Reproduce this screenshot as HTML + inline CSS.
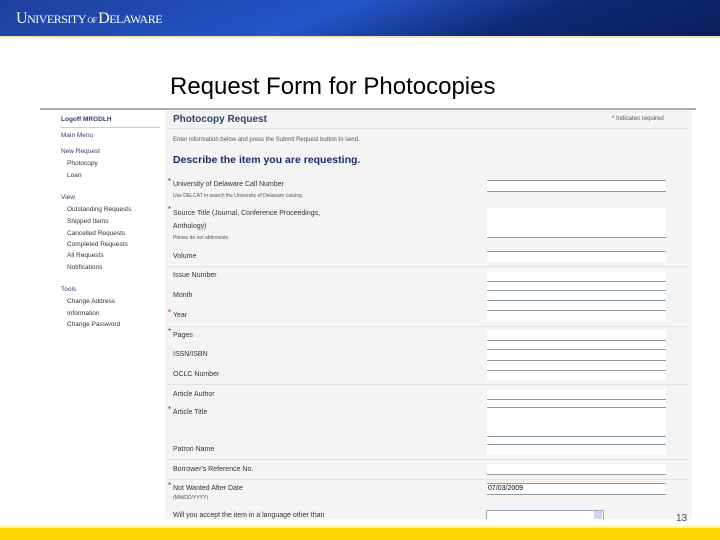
<!DOCTYPE html>
<html><head><style>
body{margin:0;width:720px;height:540px;position:relative;overflow:hidden;background:#fff;font-family:"Liberation Sans",sans-serif}
.a{position:absolute}
.hdr{left:0;top:0;width:720px;height:36px;background:linear-gradient(160deg,#1c3f9c 0%,#2456c8 45%,#0f2a78 70%,#0a1e5a 100%)}
.lbl{position:absolute;font-size:7px;color:#333;left:173px}
.req{color:#c00;font-size:8px;position:absolute;left:168px}
.nav{position:absolute;font-size:6.5px;color:#333}
.ln{position:absolute;left:487px;width:179px;height:1px;background:#8a9aa6}
.wb{position:absolute;left:487px;width:179px;background:#fff}
.sep{position:absolute;left:168px;width:521px;height:1px;background:#e2e2e2}
</style></head><body>
<div class="a hdr"></div>
<div class="a" style="left:0;top:36px;width:720px;height:2px;background:#efe5b0"></div>
<div class="a" style="left:16px;top:10px;color:#fff;font-family:'Liberation Serif',serif;font-size:16px;letter-spacing:-0.5px">U<span style="font-size:12px">NIVERSITY</span><span style="font-size:8px"> OF </span>D<span style="font-size:12px">ELAWARE</span></div>
<div class="a" style="left:170px;top:73px;font-size:24px;color:#000">Request Form for Photocopies</div>
<div class="a" style="left:40px;top:108px;width:656px;height:2px;background:#b0aca4"></div>
<div class="a" style="left:165px;top:110px;width:527px;height:410px;background:#f4f4f4"></div>
<div class="a" style="left:60px;top:127px;width:100px;height:1px;background:#ccc"></div>
<div class="nav" style="left:61px;top:116px;color:#33406b;font-weight:bold">Logoff MRGDLH</div>
<div class="nav" style="left:61px;top:132px;color:#33406b">Main Menu</div>
<div class="nav" style="left:61px;top:148px;color:#33406b">New Request</div>
<div class="nav" style="left:67px;top:160px">Photocopy</div>
<div class="nav" style="left:67px;top:172px">Loan</div>
<div class="nav" style="left:61px;top:194px;color:#33406b">View</div>
<div class="nav" style="left:67px;top:206px">Outstanding Requests</div>
<div class="nav" style="left:67px;top:218px">Shipped Items</div>
<div class="nav" style="left:67px;top:230px">Cancelled Requests</div>
<div class="nav" style="left:67px;top:241px">Completed Requests</div>
<div class="nav" style="left:67px;top:252px">All Requests</div>
<div class="nav" style="left:67px;top:264px">Notifications</div>
<div class="nav" style="left:61px;top:286px;color:#33406b">Tools</div>
<div class="nav" style="left:67px;top:298px">Change Address</div>
<div class="nav" style="left:67px;top:310px">Information</div>
<div class="nav" style="left:67px;top:321px">Change Password</div>
<div class="a" style="left:173px;top:114px;font-size:10px;font-weight:bold;color:#33406b">Photocopy Request</div>
<div class="a" style="left:612px;top:116px;font-size:6px;color:#555"><span style="color:#c00">*</span> Indicates required</div>
<div class="sep" style="top:128px"></div>
<div class="lbl" style="top:137px;font-size:6px;color:#555">Enter information below and press the Submit Request button to send.</div>
<div class="a" style="left:173px;top:154px;font-size:10.5px;font-weight:bold;color:#1a2a6b">Describe the item you are requesting.</div>
<div class="req" style="top:177px">*</div><div class="lbl" style="top:181px">University of Delaware Call Number</div>
<div class="lbl" style="top:193px;font-size:5px;color:#555">Use DELCAT to search the University of Delaware catalog.</div>
<div class="ln" style="top:180px"></div><div class="wb" style="top:181px;height:10px"></div><div class="ln" style="top:191px"></div>
<div class="req" style="top:205px">*</div><div class="lbl" style="top:210px">Source Title (Journal, Conference Proceedings,</div>
<div class="lbl" style="top:223px">Anthology)</div>
<div class="lbl" style="top:235px;font-size:5px;color:#555">Please do not abbreviate.</div>
<div class="wb" style="top:208px;height:29px"></div><div class="ln" style="top:237px"></div>
<div class="ln" style="top:251px"></div><div class="wb" style="top:252px;height:10px"></div>
<div class="lbl" style="top:253px">Volume</div>
<div class="sep" style="top:266px"></div>
<div class="wb" style="top:271px;height:50px"></div>
<div class="ln" style="top:281px"></div><div class="ln" style="top:290px"></div><div class="ln" style="top:300px"></div><div class="ln" style="top:310px"></div>
<div class="lbl" style="top:272px">Issue Number</div>
<div class="lbl" style="top:292px">Month</div>
<div class="req" style="top:308px">*</div><div class="lbl" style="top:312px">Year</div>
<div class="sep" style="top:326px"></div>
<div class="req" style="top:327px">*</div><div class="lbl" style="top:332px">Pages</div>
<div class="wb" style="top:330px;height:50px"></div>
<div class="ln" style="top:340px"></div><div class="ln" style="top:349px"></div><div class="ln" style="top:360px"></div><div class="ln" style="top:370px"></div>
<div class="lbl" style="top:351px">ISSN/ISBN</div>
<div class="lbl" style="top:371px">OCLC Number</div>
<div class="sep" style="top:384px"></div>
<div class="wb" style="top:389px;height:66px"></div>
<div class="ln" style="top:399px"></div><div class="ln" style="top:407px"></div><div class="ln" style="top:436px"></div><div class="ln" style="top:444px"></div>
<div class="lbl" style="top:391px">Article Author</div>
<div class="req" style="top:405px">*</div><div class="lbl" style="top:409px">Article Title</div>
<div class="lbl" style="top:446px">Patron Name</div>
<div class="sep" style="top:459px"></div>
<div class="wb" style="top:464px;height:10px"></div><div class="ln" style="top:474px"></div>
<div class="lbl" style="top:466px">Borrower's Reference No.</div>
<div class="sep" style="top:479px"></div>
<div class="req" style="top:481px">*</div><div class="lbl" style="top:485px">Not Wanted After Date</div>
<div class="lbl" style="top:495px;font-size:5px;color:#555">(MM/DD/YYYY)</div>
<div class="ln" style="top:483px"></div><div class="wb" style="top:484px;height:10px"></div><div class="ln" style="top:494px"></div>
<div class="a" style="left:488px;top:485px;font-size:7px;color:#000">07/03/2009</div>
<div class="lbl" style="top:512px">Will you accept the item in a language other than</div>
<div class="a" style="left:486px;top:510px;width:116px;height:9px;background:#fff;border:1px solid #9ab"></div>
<div class="a" style="left:594px;top:511px;width:8px;height:8px;background:#c8d4f0"></div>
<div class="a" style="left:165px;top:519px;width:531px;height:8px;background:#fff"></div>
<div class="a" style="left:676px;top:513px;font-size:10px;color:#444">13</div>
<div class="a" style="left:0;top:528px;width:720px;height:12px;background:#ffd500"></div>
<div class="a" style="left:0;top:526px;width:720px;height:2px;background:#fff2a0"></div>
</body></html>
